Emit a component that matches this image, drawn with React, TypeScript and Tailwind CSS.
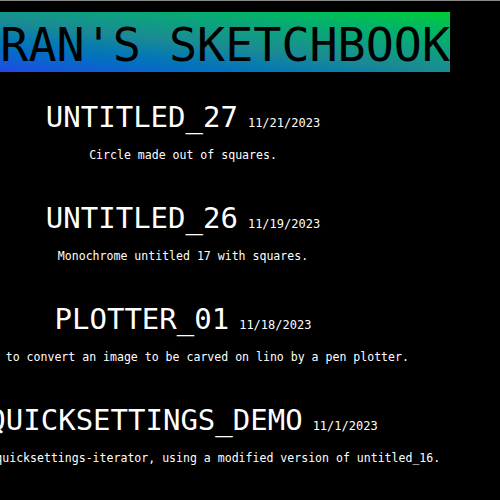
const sketches = [
  { title: 'UNTITLED_27', date: '11/21/2023', desc: 'Circle made out of squares.' },
  { title: 'UNTITLED_26', date: '11/19/2023', desc: 'Monochrome untitled 17 with squares.' },
  { title: 'PLOTTER_01', date: '11/18/2023', desc: 'A tool to convert an image to be carved on lino by a pen plotter.' },
  { title: 'QUICKSETTINGS_DEMO', date: '11/1/2023', desc: 'A demo of quicksettings-iterator, using a modified version of untitled_16.' },
];

const App = () => {
  return (
    <div className="h-[500px] w-[500px] overflow-hidden bg-black border-t border-[#8a8a8a] font-['DejaVu_Sans_Mono',monospace]">
      <div className="flex w-[366px] flex-col items-center pt-[11px]">
        {/* Header banner */}
        <h1 className="whitespace-nowrap bg-linear-to-tr from-[#2b2bf5] via-[#1a8a94] to-[#00cc2e] pt-[6px] text-[46.7px] leading-[54px] text-black">
          KIERAN'S SKETCHBOOK
        </h1>

        <div className="mt-[27px] flex flex-col items-center gap-[37px]">
          {sketches.map((s) => (
            <div key={s.title} className="flex flex-col items-center">
              <div className="flex items-baseline whitespace-nowrap text-white">
                <span className="text-[29px] leading-[36px]">{s.title}</span>
                <span className="ml-[10px] text-[12px] leading-[16px]">{s.date}</span>
              </div>
              <p className="mt-3 whitespace-nowrap text-[11.55px] leading-[16px] text-white">{s.desc}</p>
            </div>
          ))}
        </div>
      </div>
    </div>
  );
};

export default App;
